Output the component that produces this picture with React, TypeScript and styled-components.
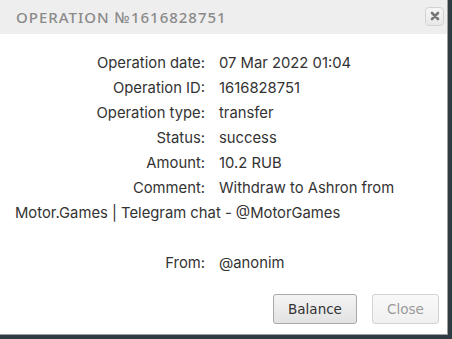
import React from "react";
import styled, { createGlobalStyle } from "styled-components";

const GlobalStyle = createGlobalStyle`
  html, body {
    margin: 0;
    padding: 0;
    background: #2f3c44;
  }
`;

const Dialog = styled.div`
  width: 447px;
  height: 334px;
  background: #fff;
  border-right: 1px solid #9aa0a4;
  border-bottom: 1px solid #9aa0a4;
  display: flex;
  flex-direction: column;
`;

const TitleBar = styled.div`
  height: 34px;
  background: #eeeeee;
  display: flex;
  align-items: center;
  justify-content: space-between;
  padding: 0 3px 0 16px;
`;

const Title = styled.span`
  font-family: "Noto Sans", sans-serif;
  font-size: 15px;
  font-weight: 500;
  letter-spacing: 1px;
  color: #8a8a8a;
  text-transform: uppercase;
`;

const CloseIcon = styled.button`
  width: 19px;
  height: 19px;
  margin-top: -2px;
  padding: 0;
  border: 1px solid #d3d3d3;
  border-radius: 4px;
  background: linear-gradient(#f6f6f6, #e8e8e8);
  display: flex;
  align-items: center;
  justify-content: center;
`;

const Body = styled.div`
  flex: 1;
  padding: 17px 15px 0 15px;
  font-family: "Inter", "Open Sans", sans-serif;
  font-size: 14.8px;
  line-height: 25px;
  color: #333;
`;

const Row = styled.div``;

const Label = styled.span`
  display: inline-block;
  width: 190px;
  text-align: right;
  margin-right: 14px;
`;

const Gap = styled.div`
  height: 25px;
`;

const Footer = styled.div`
  display: flex;
  justify-content: flex-end;
  gap: 15px;
  padding: 0 8px 10px 0;
`;

const Button = styled.button<{ $muted?: boolean }>`
  height: 30px;
  width: ${(p) => (p.$muted ? "67px" : "84px")};
  padding: 0;
  font-family: "DejaVu Sans", Verdana, sans-serif;
  font-size: 13.5px;
  color: #333;
  border: 1px solid #a8a8a8;
  border-radius: 3px;
  background: linear-gradient(#f4f4f4, #e2e2e2);
  opacity: ${(p) => (p.$muted ? 0.5 : 1)};
`;

const rows: [string, string][] = [
  ["Operation date:", "07 Mar 2022 01:04"],
  ["Operation ID:", "1616828751"],
  ["Operation type:", "transfer"],
  ["Status:", "success"],
  ["Amount:", "10.2 RUB"],
];

export default function App() {
  return (
    <>
      <GlobalStyle />
      <Dialog>
        <TitleBar>
          <Title>Operation №1616828751</Title>
          <CloseIcon>
            <svg width="10" height="10" viewBox="0 0 10 10">
              <path d="M2 2 L8 8 M8 2 L2 8" stroke="#777" strokeWidth="2.6" strokeLinecap="round" />
            </svg>
          </CloseIcon>
        </TitleBar>
        <Body>
          {rows.map(([k, v]) => (
            <Row key={k}>
              <Label>{k}</Label>
              {v}
            </Row>
          ))}
          <Row>
            <Label>Comment:</Label>
            Withdraw to Ashron from Motor.Games | Telegram chat - @MotorGames
          </Row>
          <Gap />
          <Row>
            <Label>From:</Label>
            @anonim
          </Row>
        </Body>
        <Footer>
          <Button>Balance</Button>
          <Button $muted>Close</Button>
        </Footer>
      </Dialog>
    </>
  );
}
